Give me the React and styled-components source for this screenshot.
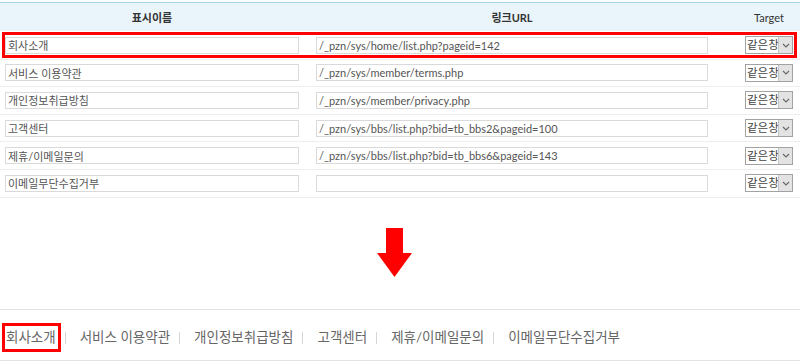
import React from "react";
import styled, { createGlobalStyle } from "styled-components";

const GlobalStyle = createGlobalStyle`
  html, body {
    margin: 0;
    padding: 0;
    background: #fff;
  }
  body {
    font-family: Lato, "Noto Sans CJK KR", sans-serif;
    color: #555;
  }
`;

const font = `Lato, "Noto Sans CJK KR", sans-serif`;

const links = [
  { name: "회사소개", url: "/_pzn/sys/home/list.php?pageid=142" },
  { name: "서비스 이용약관", url: "/_pzn/sys/member/terms.php" },
  { name: "개인정보취급방침", url: "/_pzn/sys/member/privacy.php" },
  { name: "고객센터", url: "/_pzn/sys/bbs/list.php?bid=tb_bbs2&pageid=100" },
  { name: "제휴/이메일문의", url: "/_pzn/sys/bbs/list.php?bid=tb_bbs6&pageid=143" },
  { name: "이메일무단수집거부", url: "" }
];

const Page = styled.div`
  width: 800px;
  height: 364px;
  overflow: hidden;
`;

const Table = styled.div`
  margin-top: 2px;
  border-top: 1px solid #a9d3e8;
  border-bottom: 1px solid #eee;
`;

const HeadRow = styled.div`
  display: flex;
  height: 28px;
  align-items: center;
  background: #e9f5fb;
`;

const Row = styled.div`
  position: relative;
  display: flex;
  align-items: center;
  height: 26.6px;
  border-top: 1px solid ${p => (p.$first ? "transparent" : "#eee")};

  ${p =>
    p.$active &&
    `
    &::after {
      content: "";
      position: absolute;
      top: 0;
      bottom: 1px;
      left: 2px;
      right: 3px;
      border: 3px solid #f00;
      pointer-events: none;
    }
  `}
`;

const NameCell = styled.div`
  width: 294px;
  padding-left: 5px;
  flex: none;
`;

const UrlCell = styled.div`
  width: 392px;
  padding-left: 17px;
  flex: none;
`;

const TargetCell = styled.div`
  width: 48px;
  padding-left: 37px;
  flex: none;
`;

const HeadText = styled.div`
  text-align: center;
  font-family: ${font};
  font-size: 11px;
  font-weight: ${p => (p.$light ? "normal" : "bold")};
  color: #333;
`;

const TextInput = styled.input`
  box-sizing: border-box;
  display: block;
  width: 100%;
  height: 17px;
  margin: 0;
  padding: 0 2px;
  border: 1px solid #dadada;
  background: #fff;
  font-family: ${font};
  font-size: 11px;
  color: #555;
  outline: none;
`;

const Select = styled.div`
  box-sizing: border-box;
  display: flex;
  height: 18px;
  border: 1px solid #a2a2a2;
  background: #fff;
`;

const SelectText = styled.span`
  flex: 1;
  padding-left: 1px;
  font-family: ${font};
  font-size: 11.5px;
  line-height: 16px;
  color: #444;
  white-space: nowrap;
  overflow: hidden;
`;

const SelectArrow = styled.span`
  width: 13px;
  flex: none;
  display: flex;
  align-items: center;
  justify-content: center;
  background: #e3e3e3;
  border-left: 1px solid #c4c4c4;
`;

const ArrowArea = styled.div`
  display: flex;
  justify-content: center;
  padding: 30px 11px 31px 0;
`;

const Nav = styled.nav`
  display: flex;
  align-items: center;
  box-sizing: border-box;
  height: 52px;
  padding: 6px 0 0 2px;
  border-top: 1px solid #e3e3e3;
  border-bottom: 1px solid #e3e3e3;
`;

const NavItem = styled.a`
  display: inline-block;
  padding: 0 2px 0 1px;
  border: 3px solid ${p => (p.$active ? "#f00" : "transparent")};
  font-family: ${font};
  font-size: 13.5px;
  line-height: 23px;
  color: #666;
  text-decoration: none;
  white-space: nowrap;
`;

const Divider = styled.span`
  width: 1px;
  height: 12px;
  margin: 0 10px 0 4px;
  background: #d6d6d6;
`;

const Chevron = () => (
  <svg width="8" height="5" viewBox="0 0 8 5">
    <path d="M1 1 L4 4 L7 1" fill="none" stroke="#666" strokeWidth="1.1" />
  </svg>
);

const DownArrow = () => (
  <svg width="36" height="50" viewBox="0 0 36 50">
    <path d="M9 0 H26 V25 H35 L17.5 49 L0 25 H9 Z" fill="#f00" />
  </svg>
);

export default function App() {
  return (
    <Page>
      <GlobalStyle />
      <Table>
        <HeadRow>
          <NameCell>
            <HeadText>표시이름</HeadText>
          </NameCell>
          <UrlCell>
            <HeadText>링크URL</HeadText>
          </UrlCell>
          <TargetCell>
            <HeadText $light>Target</HeadText>
          </TargetCell>
        </HeadRow>
        {links.map((link, i) => (
          <Row key={link.name} $first={i === 0} $active={i === 0}>
            <NameCell>
              <TextInput readOnly value={link.name} />
            </NameCell>
            <UrlCell>
              <TextInput readOnly value={link.url} />
            </UrlCell>
            <TargetCell>
              <Select>
                <SelectText>같은창</SelectText>
                <SelectArrow>
                  <Chevron />
                </SelectArrow>
              </Select>
            </TargetCell>
          </Row>
        ))}
      </Table>
      <ArrowArea>
        <DownArrow />
      </ArrowArea>
      <Nav>
        {links.map((link, i) => (
          <React.Fragment key={link.name}>
            {i > 0 && <Divider />}
            <NavItem $active={i === 0}>{link.name}</NavItem>
          </React.Fragment>
        ))}
      </Nav>
    </Page>
  );
}
